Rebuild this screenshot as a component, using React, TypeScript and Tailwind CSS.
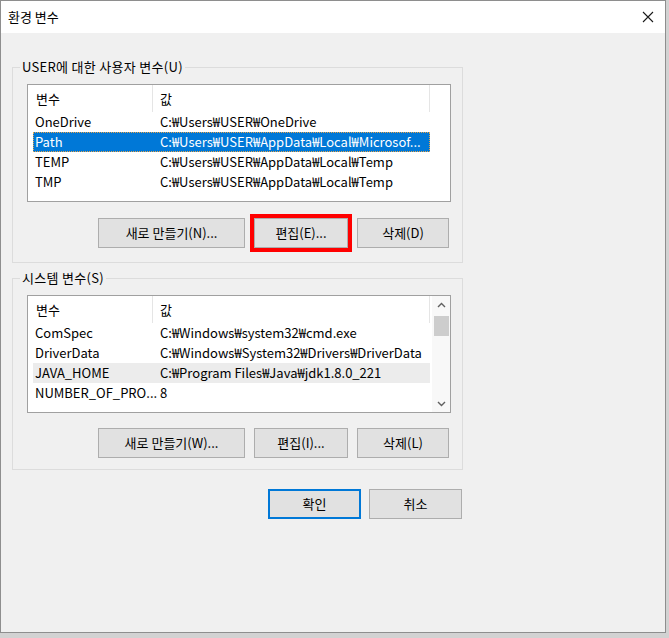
import React from 'react';

type Row = { name: string; value: string; state?: 'selected' | 'hover' };

const userVars: Row[] = [
  { name: 'OneDrive', value: 'C:₩Users₩USER₩OneDrive' },
  { name: 'Path', value: 'C:₩Users₩USER₩AppData₩Local₩Microsof...', state: 'selected' },
  { name: 'TEMP', value: 'C:₩Users₩USER₩AppData₩Local₩Temp' },
  { name: 'TMP', value: 'C:₩Users₩USER₩AppData₩Local₩Temp' },
];

const systemVars: Row[] = [
  { name: 'ComSpec', value: 'C:₩Windows₩system32₩cmd.exe' },
  { name: 'DriverData', value: 'C:₩Windows₩System32₩Drivers₩DriverData' },
  { name: 'JAVA_HOME', value: 'C:₩Program Files₩Java₩jdk1.8.0_221', state: 'hover' },
  { name: 'NUMBER_OF_PRO...', value: '8' },
];

const Button: React.FC<{ label: string; width: string; primary?: boolean; marked?: boolean }> = ({
  label,
  width,
  primary,
  marked,
}) => (
  <div className="relative">
    <button
      className={`${width} h-[30px] bg-[#e1e1e1] text-[13px] leading-4 text-black ${
        primary ? 'border-2 border-[#0078d7]' : 'border border-[#adadad]'
      }`}
    >
      {label}
    </button>
    {marked && <div className="absolute -inset-[4px] border-4 border-[#ff0000] pointer-events-none" />}
  </div>
);

const Chevron: React.FC<{ up?: boolean }> = ({ up }) => (
  <svg width="9" height="6" viewBox="0 0 9 6">
    <polyline
      points={up ? '1,5 4.5,1.5 8,5' : '1,1 4.5,4.5 8,1'}
      fill="none"
      stroke="#606060"
      strokeWidth="1.4"
    />
  </svg>
);

const ListView: React.FC<{ rows: Row[]; scroll?: boolean }> = ({ rows, scroll }) => (
  <div className="w-[424px] h-[118px] border border-[#a0a0a0] bg-white flex overflow-hidden">
    <div className="flex-1 flex flex-col">
      <div className="h-[27px] flex shrink-0">
        <div className="w-[125px] pl-[8px] flex items-center border-r border-[#e5e5e5]">변수</div>
        <div className="w-[277px] pl-[7px] flex items-center border-r border-[#e5e5e5]">값</div>
      </div>
      {rows.map((r) => (
        <div
          key={r.name}
          className={`ml-[5px] w-[397px] h-[20px] flex items-center shrink-0 ${
            r.state === 'selected'
              ? 'bg-[#0078d7] text-white outline outline-1 outline-dotted outline-[#e8a54a] -outline-offset-1'
              : r.state === 'hover'
              ? 'bg-[#ececec]'
              : ''
          }`}
        >
          <div className="w-[120px] pl-[2px] whitespace-nowrap">{r.name}</div>
          <div className="pl-[7px] whitespace-nowrap">{r.value}</div>
        </div>
      ))}
    </div>
    {scroll && (
      <div className="w-[18px] bg-[#f8f8f8] flex flex-col items-center">
        <div className="h-[17px] flex items-center justify-center">
          <Chevron up />
        </div>
        <div className="mt-[3px] w-[15px] h-[20px] bg-[#cdcdcd]" />
        <div className="flex-1" />
        <div className="h-[17px] flex items-center justify-center">
          <Chevron />
        </div>
      </div>
    )}
  </div>
);

const Group: React.FC<{
  title: string;
  rows: Row[];
  buttons: string[];
  scroll?: boolean;
  marked?: boolean;
  pb: string;
  btnMt: string;
  className?: string;
}> = ({ title, rows, buttons, scroll, marked, pb, btnMt, className }) => (
  <fieldset className={`w-[451px] border border-[#dcdcdc] ${className ?? ''}`}>
    <legend className="ml-[7px] px-[2px] text-[13px] leading-4 tracking-[0.3px]">{title}</legend>
    <div className={`pl-[14px] pt-[9px] ${pb}`}>
      <ListView rows={rows} scroll={scroll} />
      <div className={`${btnMt} w-[422px] flex justify-end gap-[9px]`}>
        <Button label={buttons[0]} width="w-[147px]" />
        <Button label={buttons[1]} width="w-[94px]" marked={marked} />
        <Button label={buttons[2]} width="w-[92px]" />
      </div>
    </div>
  </fieldset>
);

export default function App() {
  return (
    <div
      className="w-[669px] h-[638px] bg-[#d2d2d2] text-[13px] leading-4 text-black"
      style={{ fontFamily: '"Noto Sans CJK KR", "Noto Sans", sans-serif' }}
    >
      <div className="w-[666px] h-[633px] border border-[#8e8e8e] bg-[#f0f0f0] flex flex-col">
        <div className="h-[32px] bg-white flex items-center justify-between pl-[7px] pr-[11px]">
          <span className="text-[13px]">환경 변수</span>
          <svg width="12" height="12" viewBox="0 0 12 12">
            <path d="M1 1 L11 11 M11 1 L1 11" stroke="#1a1a1a" strokeWidth="1.1" />
          </svg>
        </div>
        <div className="pl-[11px] pt-[26px] flex flex-col">
          <Group
            title="USER에 대한 사용자 변수(U)"
            rows={userVars}
            buttons={['새로 만들기(N)...', '편집(E)...', '삭제(D)']}
            marked
            pb="pb-[14px]"
            btnMt="mt-[16px]"
          />
          <Group
            title="시스템 변수(S)"
            rows={systemVars}
            buttons={['새로 만들기(W)...', '편집(I)...', '삭제(L)']}
            scroll
            pb="pb-[11px]"
            btnMt="mt-[15px]"
            className="mt-[7px]"
          />
          <div className="mt-[19px] w-[451px] flex justify-end gap-[8px] pr-[1px]">
            <Button label="확인" width="w-[93px]" primary />
            <Button label="취소" width="w-[93px]" />
          </div>
        </div>
      </div>
    </div>
  );
}
